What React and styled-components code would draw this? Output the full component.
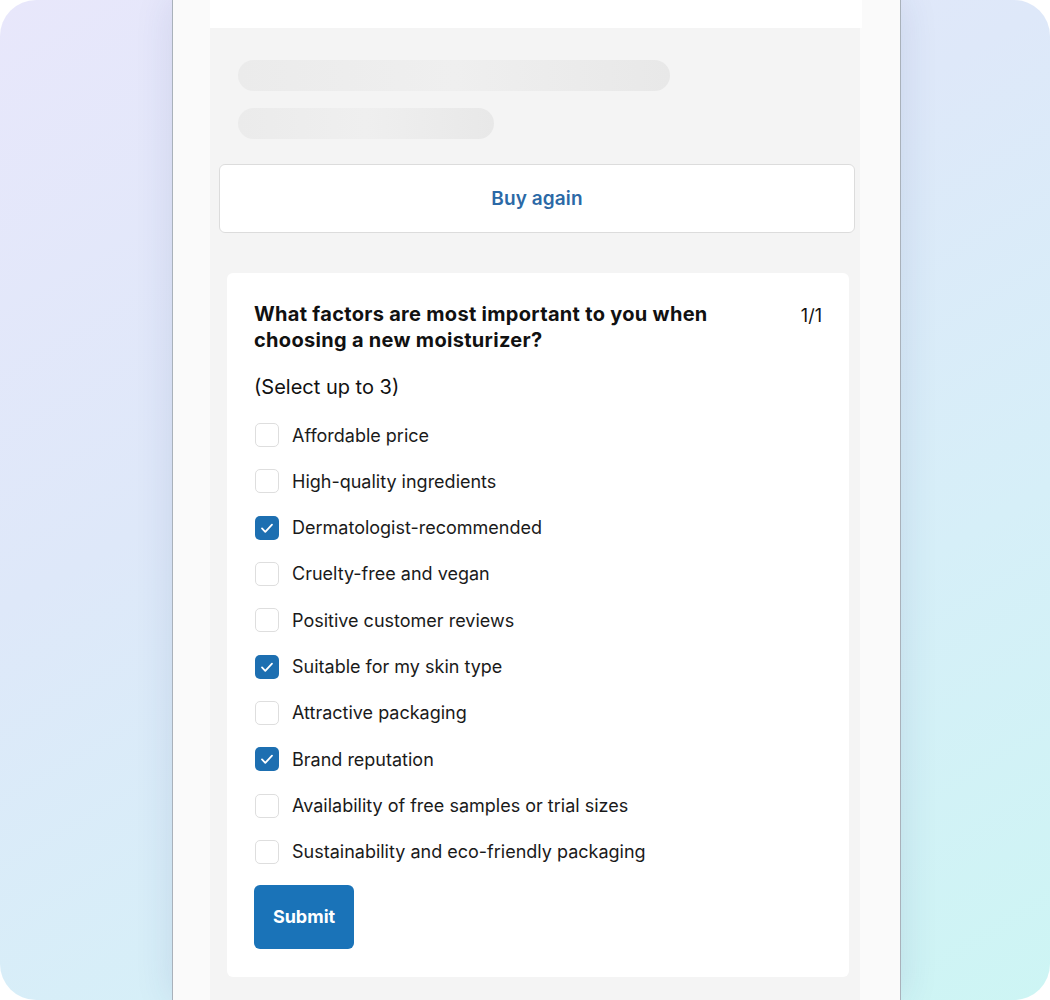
import React from "react";
import styled, { createGlobalStyle } from "styled-components";

const GlobalStyle = createGlobalStyle`
  html, body {
    margin: 0;
    padding: 0;
    background: #ffffff;
  }
  body {
    font-family: Inter, "Noto Sans", "Liberation Sans", sans-serif;
    -webkit-font-smoothing: antialiased;
  }
`;

const Backdrop = styled.div`
  width: 1050px;
  height: 1000px;
  border-radius: 36px;
  overflow: hidden;
  background: linear-gradient(150deg, #e8e7fb 0%, #dee8f9 38%, #d6eff8 68%, #cdf5f4 100%);
  display: flex;
  padding-left: 172px;
  box-sizing: border-box;
`;

const Phone = styled.div`
  width: 729px;
  height: 100%;
  box-sizing: border-box;
  background: #fafafa;
  border-left: 1px solid #a9b1ba;
  border-right: 1px solid #a9b1ba;
  box-shadow: 0 0 36px rgba(40, 60, 120, 0.12);
  padding-left: 37px;
  display: flex;
`;

const Column = styled.div`
  width: 650px;
  background: #f4f4f4;
  display: flex;
  flex-direction: column;
`;

const TopBlock = styled.div`
  height: 28px;
  background: #ffffff;
  margin-right: -2px;
`;

const Body = styled.div`
  padding: 32px 0 0;
  display: flex;
  flex-direction: column;
`;

const Skeleton = styled.div`
  height: 31px;
  width: ${(p) => p.$w}px;
  margin-left: 28px;
  margin-bottom: ${(p) => p.$mb}px;
  border-radius: 16px;
  background: linear-gradient(90deg, #ebebeb 0%, #efefef 50%, #e8e8e8 100%);
`;

const BuyAgain = styled.button`
  margin: 0 0 40px 9px;
  width: 636px;
  height: 69px;
  background: #ffffff;
  border: 1px solid #dcdcdc;
  border-radius: 6px;
  color: #2b69a6;
  font-family: inherit;
  font-size: 19px;
  font-weight: 600;
  letter-spacing: 0.1px;
  cursor: pointer;
`;

const Card = styled.div`
  margin-left: 17px;
  width: 622px;
  box-sizing: border-box;
  background: #ffffff;
  border-radius: 6px;
  padding: 28px 27px 28px 27px;
  display: flex;
  flex-direction: column;
`;

const Header = styled.div`
  display: flex;
  justify-content: space-between;
  align-items: flex-start;
`;

const Question = styled.h2`
  margin: 0;
  max-width: 500px;
  font-size: 20px;
  line-height: 26px;
  font-weight: 700;
  letter-spacing: 0.3px;
  color: #111111;
`;

const Counter = styled.span`
  margin-top: 2px;
  font-size: 18px;
  line-height: 26px;
  color: #111111;
`;

const Hint = styled.p`
  margin: 21px 0 22px;
  font-size: 20px;
  line-height: 26px;
  color: #111111;
`;

const Options = styled.div`
  display: flex;
  flex-direction: column;
  gap: 20.33px;
`;

const Option = styled.label`
  display: flex;
  align-items: center;
  gap: 13px;
  height: 26px;
  font-size: 18px;
  color: #1a1a1a;
  cursor: pointer;
`;

const Box = styled.span`
  width: 24px;
  height: 24px;
  margin-left: 1px;
  box-sizing: border-box;
  border-radius: 5px;
  border: ${(p) => (p.$checked ? "none" : "1.5px solid #dedede")};
  background: ${(p) => (p.$checked ? "#1d6fb1" : "#ffffff")};
  display: flex;
  align-items: center;
  justify-content: center;
  flex-shrink: 0;
`;

const Submit = styled.button`
  margin-top: 20px;
  align-self: flex-start;
  width: 100px;
  height: 64px;
  border: none;
  border-radius: 6px;
  background: #1a73b8;
  color: #ffffff;
  font-family: inherit;
  font-size: 18px;
  font-weight: 700;
  cursor: pointer;
`;

const options = [
  ["Affordable price", false],
  ["High-quality ingredients", false],
  ["Dermatologist-recommended", true],
  ["Cruelty-free and vegan", false],
  ["Positive customer reviews", false],
  ["Suitable for my skin type", true],
  ["Attractive packaging", false],
  ["Brand reputation", true],
  ["Availability of free samples or trial sizes", false],
  ["Sustainability and eco-friendly packaging", false],
];

function Check() {
  return (
    <svg width="24" height="24" viewBox="0 0 24 24" fill="none">
      <path d="M7 12.4l3.3 3.4L17 8.6" stroke="#ffffff" strokeWidth="1.8" strokeLinecap="round" strokeLinejoin="round" />
    </svg>
  );
}

export default function App() {
  return (
    <>
      <GlobalStyle />
      <Backdrop>
        <Phone>
          <Column>
            <TopBlock />
            <Body>
              <Skeleton $w={432} $mb={17} />
              <Skeleton $w={256} $mb={25} />
              <BuyAgain>Buy again</BuyAgain>
              <Card>
                <Header>
                  <Question>What factors are most important to you when choosing a new moisturizer?</Question>
                  <Counter>1/1</Counter>
                </Header>
                <Hint>(Select up to 3)</Hint>
                <Options>
                  {options.map(([label, checked]) => (
                    <Option key={label}>
                      <Box $checked={checked}>{checked && <Check />}</Box>
                      {label}
                    </Option>
                  ))}
                </Options>
                <Submit>Submit</Submit>
              </Card>
            </Body>
          </Column>
        </Phone>
      </Backdrop>
    </>
  );
}
